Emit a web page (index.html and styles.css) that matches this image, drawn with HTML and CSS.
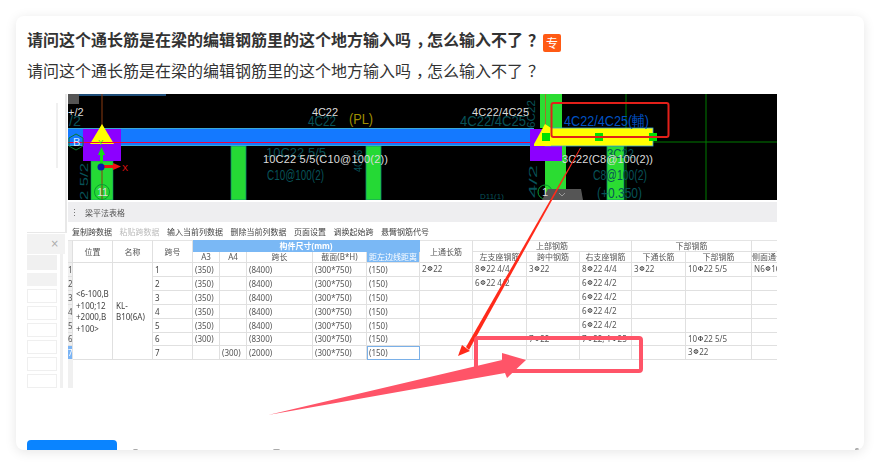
FILE: index.html
```html
<!DOCTYPE html>
<html lang="zh">
<head>
<meta charset="utf-8">
<title>问答</title>
<link rel="stylesheet" href="styles.css">
</head>
<body>
<main class="card">
  <h1 class="title">请问这个通长筋是在梁的编辑钢筋里的这个地方输入吗<span class="mark">，</span>怎么输入不了<span class="mark">？</span><span class="badge">专</span></h1>
  <p class="desc">请问这个通长筋是在梁的编辑钢筋里的这个地方输入吗<span class="mark">，</span>怎么输入不了<span class="mark">？</span></p>

  <div class="shot">
    <aside class="side">
      <div class="side-top"><span class="side-bar"></span></div>
      <div class="side-panel">
        <div class="side-head"><span class="side-close">×</span></div>
        <div class="side-body">
          <div class="side-rows">
            <span class="row-dark"></span><span class="row-mid"></span>
            <span class="row-box"></span><span class="row-box"></span><span class="row-box"></span>
            <span class="row-box"></span><span class="row-box"></span><span class="row-box"></span>
          </div>
          <span class="side-scroll"></span>
        </div>
      </div>
    </aside>

    <div class="work">
      <svg class="cad" viewBox="68 94 709 106" width="709" height="106" aria-label="CAD">
        <rect x="68" y="94" width="709" height="106" fill="#000"/>
        <rect x="68" y="94" width="11" height="10" fill="#555"/>
        <rect x="79" y="94" width="87" height="2" fill="#1f4e79"/>
        <!-- grid -->
        <path d="M626 94V200M706 94V200M562 142H777" stroke="#007a00" fill="none"/>
        <!-- columns -->
        <rect x="540" y="94" width="22" height="34" fill="#2bdc32"/>
        <path d="M545.500 94V125" stroke="#a5702a"/>
        <rect x="91" y="161" width="22" height="39" fill="#25d935" stroke="#0a8a70" stroke-width=".6"/>
        <rect x="231" y="146" width="15" height="54" fill="#25d935" stroke="#0a8a70" stroke-width=".8"/>
        <rect x="366" y="146" width="15" height="54" fill="#25d935" stroke="#0a8a70" stroke-width=".8"/>
        <rect x="545" y="146" width="21" height="54" fill="#2bdc32"/>
        <rect x="607" y="146" width="17" height="54" fill="#2bdc32" stroke="#0a8a70" stroke-width=".8"/>
        <path d="M102 94V126M102 161V200" stroke="#8a3a10"/>
        <!-- beam -->
        <rect x="68" y="128" width="466" height="18" fill="#1479ff"/>
        <path d="M68 128.500H534M68 145.500H534" stroke="#3aa8d8"/>
        <path d="M68 142.500H535" stroke="#f4003c"/>
        <!-- selected beam -->
        <rect x="530" y="129" width="32" height="32" fill="#8c00ff"/>
        <rect x="545" y="128" width="108" height="18" fill="#ff0" stroke="#3aa8d8" stroke-width=".8"/>
        <path d="M534 144L545 124L551 128V146H534Z" fill="#ff0"/>
        <rect x="542" y="133" width="8" height="8" fill="#00e000"/>
        <rect x="595" y="133" width="8" height="8" fill="#00e000"/>
        <rect x="649" y="133" width="8" height="8" fill="#00e000"/>
        <!-- origin node -->
        <rect x="83" y="129" width="38" height="32" fill="#8c00ff"/>
        <path d="M102 124L114 144H90Z" fill="#ff0"/>
        <path d="M68 142.500H121" stroke="#f4003c"/>
        <path d="M76 134L83 138V146L76 150L69 146V138Z" fill="none" stroke="#0a7a30"/>
        <path d="M101.500 165V153" stroke="#14e014" stroke-width="3"/>
        <path d="M101.500 147L105 155H98Z" fill="#14e014"/>
        <path d="M102 166.500H114" stroke="#f01010" stroke-width="3"/>
        <path d="M121 166.500L113 170V163Z" fill="#f01010"/>
        <circle cx="101" cy="167" r="3.500" fill="#0a1ab0"/>
        <circle cx="102" cy="192" r="7.500" fill="none" stroke="#0a9a30"/>
        <circle cx="545" cy="192" r="7" fill="none" stroke="#0a9a30"/>
        <path d="M548 189H581L583 200H542Z" fill="#555"/>
        <path d="M559 193L562 196L565 193" fill="none" stroke="#999"/>
        <!-- teal labels -->
        <g class="teal">
          <text x="69" y="126" textLength="12" lengthAdjust="spacingAndGlyphs">/2</text>
          <text x="308" y="126" textLength="28" lengthAdjust="spacingAndGlyphs">4C22</text>
          <text x="460" y="126" textLength="66" lengthAdjust="spacingAndGlyphs">4C22/4C25</text>
          <text class="small" x="266" y="157" textLength="60" lengthAdjust="spacingAndGlyphs">10C22 5/5</text>
          <text x="267" y="180" textLength="57" lengthAdjust="spacingAndGlyphs">C10@100(2)</text>
          <text x="593" y="180" textLength="54" lengthAdjust="spacingAndGlyphs">C8@100(2)</text>
          <text x="597" y="198" textLength="45" lengthAdjust="spacingAndGlyphs">(+0.350)</text>
          <text class="small" x="607" y="158" textLength="27" lengthAdjust="spacingAndGlyphs">3C22</text>
          <text class="tiny" x="480" y="199">D11(1)</text>
          <text class="v" transform="translate(88 200) rotate(-90)" textLength="37" lengthAdjust="spacingAndGlyphs">2 5/2</text>
          <text class="v" transform="translate(362 172) rotate(-90)" textLength="22" lengthAdjust="spacingAndGlyphs">4C06</text>
          <text class="v" transform="translate(535 128) rotate(-90)" textLength="28" lengthAdjust="spacingAndGlyphs">6C22</text>
          <text class="v" transform="translate(537 198) rotate(-90)" textLength="33" lengthAdjust="spacingAndGlyphs">4/2</text>
        </g>
        <!-- white labels -->
        <g class="white">
          <text x="68" y="116">+/2</text>
          <text x="312" y="116" textLength="26">4C22</text>
          <text x="472" y="116" textLength="57">4C22/4C25</text>
          <text x="263" y="163" textLength="125">10C22 5/5(C10@100(2))</text>
          <text x="562" y="163" textLength="91">3C22(C8@100(2))</text>
          <text x="97" y="196" textLength="11">11</text>
          <text x="542" y="196">1</text>
        </g>
        <text class="pl" x="349" y="124" textLength="24" lengthAdjust="spacingAndGlyphs">(PL)</text>
        <text class="blue" x="564" y="126" textLength="85" lengthAdjust="spacingAndGlyphs">4C22/4C25(輔)</text>
        <text class="axis-x" x="122" y="171">X</text>
        <text class="axis-y" x="98" y="145">Y</text>
        <text class="axis-b" x="73" y="146">B</text>
        <rect x="551.500" y="103" width="117" height="34" rx="2" fill="none" stroke="#e3201a" stroke-width="2"/>
      </svg>

      <div class="panel-head"><span class="grip"></span><span>梁平法表格</span></div>
      <div class="tools">
        <span>复制跨数据</span><span class="off">粘贴跨数据</span><span>输入当前列数据</span><span>删除当前列数据</span><span>页面设置</span><span>调换起始跨</span><span>悬臂钢筋代号</span>
      </div>

      <div class="sheet">
        <table class="grid">
          <colgroup>
            <col class="c5"><col class="c40"><col class="c40"><col class="c40"><col class="c27"><col class="c27"><col class="c66"><col class="c54"><col class="c53"><col class="c53"><col class="c54"><col class="c53"><col class="c52"><col class="c54"><col class="c66"><col class="c60">
          </colgroup>
          <thead>
            <tr class="h1">
              <th rowspan="2" class="num"></th>
              <th rowspan="2" class="big">位置</th><th rowspan="2" class="big">名称</th><th rowspan="2" class="big">跨号</th>
              <th colspan="5" class="blue-head">构件尺寸(mm)</th>
              <th rowspan="2" class="big">上通长筋</th>
              <th colspan="3">上部钢筋</th>
              <th colspan="2">下部钢筋</th>
              <th></th>
            </tr>
            <tr class="h2">
              <th>A3</th><th>A4</th><th>跨长</th><th>截面(B*H)</th><th class="blue-cell">距左边线距离</th>
              <th>左支座钢筋</th><th>跨中钢筋</th><th>右支座钢筋</th><th>下通长筋</th><th>下部钢筋</th><th class="cut">侧面通长筋</th>
            </tr>
          </thead>
          <tbody>
            <tr><td class="num">1</td><td rowspan="7" class="pos">&lt;6-100,B<br>+100;12<br>+2000,B<br>+100&gt;</td><td rowspan="7" class="pos">KL-<br>B10(6A)</td><td class="span">1</td><td>(350)</td><td></td><td>(8400)</td><td>(300*750)</td><td>(150)</td><td>2<b>Φ</b>22</td><td>8<b>Φ</b>22 4/4</td><td>3<b>Φ</b>22</td><td>8<b>Φ</b>22 4/4</td><td>3<b>Φ</b>22</td><td>10<b>Φ</b>22 5/5</td><td class="cut">N6<b>Φ</b>16</td></tr>
            <tr><td class="num">2</td><td class="span">2</td><td>(350)</td><td></td><td>(8400)</td><td>(300*750)</td><td>(150)</td><td></td><td>6<b>Φ</b>22 4/2</td><td></td><td>6<b>Φ</b>22 4/2</td><td></td><td></td><td></td></tr>
            <tr><td class="num">3</td><td class="span">3</td><td>(350)</td><td></td><td>(8400)</td><td>(300*750)</td><td>(150)</td><td></td><td></td><td></td><td>6<b>Φ</b>22 4/2</td><td></td><td></td><td></td></tr>
            <tr><td class="num">4</td><td class="span">4</td><td>(350)</td><td></td><td>(8400)</td><td>(300*750)</td><td>(150)</td><td></td><td></td><td></td><td>6<b>Φ</b>22 4/2</td><td></td><td></td><td></td></tr>
            <tr><td class="num">5</td><td class="span">5</td><td>(350)</td><td></td><td>(8400)</td><td>(300*750)</td><td>(150)</td><td></td><td></td><td></td><td>6<b>Φ</b>22 4/2</td><td></td><td></td><td></td></tr>
            <tr class="short"><td class="num">6</td><td class="span">6</td><td>(300)</td><td></td><td>(8300)</td><td>(300*750)</td><td>(150)</td><td></td><td></td><td>7<b>Φ</b>22</td><td>7<b>Φ</b>22, 1<b>Φ</b>25</td><td></td><td>10<b>Φ</b>22 5/5</td><td></td></tr>
            <tr><td class="num active"><span>7</span></td><td class="span">7</td><td></td><td>(300)</td><td>(2000)</td><td>(300*750)</td><td class="focus">(150)</td><td></td><td></td><td></td><td></td><td></td><td>3<b>Φ</b>22</td><td></td></tr>
          </tbody>
        </table>
        <div class="gutter"></div>
      </div>
    </div>

    <svg class="marks" viewBox="0 0 880 466" width="880" height="466" aria-hidden="true">
      <path class="thin" d="M580 148L466 347L469 350L581 148Z"/>
      <path class="thin" d="M458 356L462 345L470 351Z"/>
      <path class="pink" d="M268 415L502 360L502 353L526 360L507 378L505 373Z"/>
      <rect class="pink-box" x="476" y="338" width="165" height="33" rx="2"/>
    </svg>
  </div>

  <div class="actions">
    <button class="answer" type="button"></button>
    <span class="tip tip-a"></span>
    <span class="tip tip-b"></span>
    <span class="tip tip-c"></span>
  </div>
</main>
</body>
</html>
```
FILE: styles.css
```css
* { box-sizing: border-box; }
html, body { margin: 0; height: 466px; overflow: hidden; background: #fff; }
body {
  padding: 16px;
  font-family: "Noto Sans CJK SC", "Noto Sans", sans-serif;
  color: #333;
}

.card {
  position: relative;
  height: 434px;
  padding: 11px 11px 0;
  background: #fff;
  border-radius: 8px;
  box-shadow: 0 2px 12px rgba(0, 0, 0, .1);
  overflow: hidden;
}

.title {
  display: flex;
  align-items: center;
  margin: 0;
  height: 24px;
  font-size: 16px;
  line-height: 24px;
  font-weight: 700;
  color: #333;
  white-space: nowrap;
}
.mark { margin-left: 5px; margin-right: -5px; }
.badge {
  width: 18px;
  height: 18px;
  margin: 8px 0 0 4px;
  background: #ff5a14;
  border-radius: 2px;
  color: #fff;
  font-size: 12px;
  font-weight: 400;
  line-height: 18px;
  text-align: center;
}
.desc {
  margin: 7px 0 0;
  font-size: 16px;
  line-height: 24px;
  color: #333;
  white-space: nowrap;
}

.shot { display: flex; width: 750px; height: 294px; margin-top: 12px; }

.side { width: 41px; display: flex; flex-direction: column; flex: none; }
.side-top {
  height: 139px;
  display: flex;
  justify-content: flex-end;
  align-items: flex-start;
  padding-top: 9px;
  padding-right: 7px;
  border-right: 2px solid #e8e8e8;
  border-bottom: 1px solid #e8e8e8;
  margin-right: 1px;
}
.side-bar { width: 2px; height: 65px; background: #f0f0f0; }
.side-panel { margin-top: 1px; flex: 1; display: flex; flex-direction: column; width: 38px; }
.side-head {
  height: 20px;
  background: #f2f2f2;
  display: flex;
  justify-content: flex-end;
  align-items: center;
  padding-right: 6px;
}
.side-close { font: 10px/1 "DejaVu Sans", sans-serif; color: #aaa; }
.side-body { flex: 1; display: flex; gap: 3px; overflow: hidden; }
.side-rows { width: 30px; display: flex; flex-direction: column; gap: 3px; padding-top: 1px; }
.side-rows span { flex: none; display: block; }
.row-dark { height: 15px; background: #f0f0f0; }
.row-mid { height: 13px; background: #f2f2f2; }
.row-box { height: 14px; border: 1px solid #efefef; background: #fff; }
.side-scroll { width: 3px; background: #f0f0f0; }

.work { width: 709px; flex: none; display: flex; flex-direction: column; }
.cad { display: block; flex: none; }
.cad text { font-family: "Liberation Sans", sans-serif; }
.teal text { fill: #075258; font-size: 15px; }
.teal .small { font-size: 12px; }
.teal .tiny { font-size: 8px; }
.teal .v { font-size: 11px; }
.white text { fill: #dcdcdc; font-size: 11px; }
.pl { fill: #a09000; font-size: 15px; }
.blue { fill: #0052c4; font-size: 15px; }
.axis-x { fill: #e01010; font-size: 9px; }
.axis-y { fill: #20e020; font-size: 8px; }
.axis-b { fill: #d0e8ff; font-size: 11px; }

.panel-head {
  margin-top: 2px;
  height: 20px;
  flex: none;
  display: flex;
  align-items: center;
  gap: 9px;
  padding-left: 5px;
  background: #eeeef0;
  font-size: 8px;
  color: #555;
  filter: blur(.3px);
}
.grip {
  width: 3px;
  height: 9px;
  background: radial-gradient(circle, #777 .6px, transparent .9px) 0 0 / 3px 3px;
}
.tools {
  height: 18px;
  flex: none;
  display: flex;
  align-items: center;
  gap: 7.500px;
  padding-left: 4px;
  font-size: 8px;
  color: #444;
  white-space: nowrap;
  filter: blur(.3px);
}
.tools .off { color: #bbb; }

.sheet { position: relative; flex: 1; overflow: hidden; filter: blur(.25px); }
.gutter { position: absolute; left: 0; top: 119px; bottom: 0; width: 5px; background: #f0f0f0; }
.grid {
  table-layout: fixed;
  width: 744px;
  border-collapse: separate;
  border-spacing: 0;
  font-family: "Noto Sans", "Noto Sans CJK SC", sans-serif;
  font-size: 8px;
  color: #555;
}
.c5 { width: 5px; }
.c27 { width: 27px; }
.c40 { width: 40px; }
.c52 { width: 52px; }
.c53 { width: 53px; }
.c54 { width: 54px; }
.c60 { width: 60px; }
.c66 { width: 66px; }
.grid th, .grid td {
  padding: 0 0 0 2px;
  border-right: 1px solid #e0e0e0;
  border-bottom: 1px solid #e0e0e0;
  overflow: hidden;
  white-space: nowrap;
  line-height: 10px;
}
.grid th {
  font-weight: 400;
  text-align: center;
  padding: 0;
  background: #fff;
}
.h1 th { height: 12px; border-top: 1px solid #e4e4e4; }
.h2 th { height: 10px; }
.grid td { height: 14px; }
.short td { height: 13px; }
.grid .big { font-size: 8px; }
.grid .blue-head { background: #7ab8f5; color: #fff; font-weight: 700; border-color: #7ab8f5; }
.grid .blue-cell { background: #7ab8f5; color: #fff; }
.grid .num { padding: 0; background: #f0f0f0; font-size: 8px; text-align: left; }
.grid .active { background: #7ab4f5; color: #fff; }
.grid .pos { white-space: normal; line-height: 11.500px; word-break: break-all; padding-left: 3px; color: #444; background: #fff; }
.grid .span { padding-left: 2px; color: #444; }
.grid .focus { border: 1px solid #7ab0e8; padding-left: 1px; }
.grid .cut { text-align: left; }
.grid b { font-family: "DejaVu Sans", sans-serif; font-size: 7px; font-weight: 400; color: #222; position: relative; top: -1px; padding: 0 .5px; }

.marks { position: absolute; left: -16px; top: -16px; pointer-events: none; }
.thin { fill: #ff2a1a; }
.pink { fill: #ff5468; }
.pink-box { fill: none; stroke: #ff5468; stroke-width: 4; }

.actions { display: flex; margin-top: 52px; align-items: flex-start; }
.answer { width: 90px; height: 40px; border: 0; border-radius: 4px; background: #0a84ff; padding: 0; }
.tip { display: block; height: 3px; background: #aaa; border-radius: 2px; margin-top: 9px; }
.tip-a { width: 5px; margin-left: 16px; }
.tip-b { width: 7px; margin-left: 135px; }
.tip-c { width: 4px; margin-left: auto; margin-right: -6px; margin-top: 8px; }
```
